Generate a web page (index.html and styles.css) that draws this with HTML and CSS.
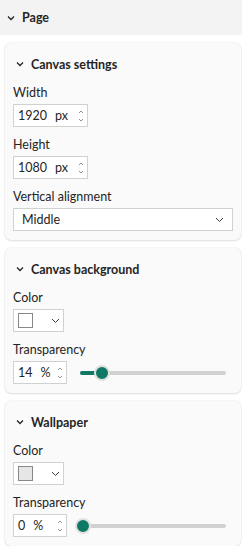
FILE: index.html
```html
<!DOCTYPE html>
<html>
<head>
  <title>Format page</title>
  <link rel="stylesheet" href="styles.css">
</head>
<body>
  <div class="pane-header">
    <svg class="chev" width="8" height="6" viewBox="0 0 8 6"><path d="M1 1.5 L4 4.5 L7 1.5" fill="none" stroke="#252423" stroke-width="1.3"/></svg>
    <span>Page</span>
  </div>

  <div class="card">
    <div class="card-title">
      <svg class="chev" width="8" height="6" viewBox="0 0 8 6"><path d="M1 1.5 L4 4.5 L7 1.5" fill="none" stroke="#252423" stroke-width="1.3"/></svg>
      <span>Canvas settings</span>
    </div>
    <label class="field-label">Width</label>
    <div class="num-input wide">
      <span class="val">1920</span><span class="unit">px</span>
      <span class="spin">
        <svg width="6" height="4" viewBox="0 0 6 4"><path d="M1 3 L3 1 L5 3" fill="none" stroke="#8a8886" stroke-width="0.9"/></svg>
        <svg width="6" height="4" viewBox="0 0 6 4"><path d="M1 1 L3 3 L5 1" fill="none" stroke="#8a8886" stroke-width="0.9"/></svg>
      </span>
    </div>
    <label class="field-label">Height</label>
    <div class="num-input wide">
      <span class="val">1080</span><span class="unit">px</span>
      <span class="spin">
        <svg width="6" height="4" viewBox="0 0 6 4"><path d="M1 3 L3 1 L5 3" fill="none" stroke="#8a8886" stroke-width="0.9"/></svg>
        <svg width="6" height="4" viewBox="0 0 6 4"><path d="M1 1 L3 3 L5 1" fill="none" stroke="#8a8886" stroke-width="0.9"/></svg>
      </span>
    </div>
    <label class="field-label">Vertical alignment</label>
    <div class="select">
      <span>Middle</span>
      <svg width="9" height="6" viewBox="0 0 9 6"><path d="M1 1 L4.5 4.5 L8 1" fill="none" stroke="#3b3a39" stroke-width="1"/></svg>
    </div>
  </div>

  <div class="card">
    <div class="card-title">
      <svg class="chev" width="8" height="6" viewBox="0 0 8 6"><path d="M1 1.5 L4 4.5 L7 1.5" fill="none" stroke="#252423" stroke-width="1.3"/></svg>
      <span>Canvas background</span>
    </div>
    <label class="field-label">Color</label>
    <div class="color-btn">
      <span class="swatch"></span>
      <svg width="9" height="6" viewBox="0 0 9 6"><path d="M1 1 L4.5 4.5 L8 1" fill="none" stroke="#3b3a39" stroke-width="1"/></svg>
    </div>
    <label class="field-label">Transparency</label>
    <div class="slider-row">
      <div class="num-input short">
        <span class="val">14</span><span class="unit">%</span>
        <span class="spin">
          <svg width="6" height="4" viewBox="0 0 6 4"><path d="M1 3 L3 1 L5 3" fill="none" stroke="#8a8886" stroke-width="0.9"/></svg>
          <svg width="6" height="4" viewBox="0 0 6 4"><path d="M1 1 L3 3 L5 1" fill="none" stroke="#8a8886" stroke-width="0.9"/></svg>
        </span>
      </div>
      <div class="slider">
        <div class="track"><div class="fill" style="width: 22px"></div></div>
        <div class="thumb" style="left: 14px"></div>
      </div>
    </div>
  </div>

  <div class="card">
    <div class="card-title">
      <svg class="chev" width="8" height="6" viewBox="0 0 8 6"><path d="M1 1.5 L4 4.5 L7 1.5" fill="none" stroke="#252423" stroke-width="1.3"/></svg>
      <span>Wallpaper</span>
    </div>
    <label class="field-label">Color</label>
    <div class="color-btn">
      <span class="swatch gray"></span>
      <svg width="9" height="6" viewBox="0 0 9 6"><path d="M1 1 L4.5 4.5 L8 1" fill="none" stroke="#3b3a39" stroke-width="1"/></svg>
    </div>
    <label class="field-label">Transparency</label>
    <div class="slider-row">
      <div class="num-input short">
        <span class="val">0</span><span class="unit">%</span>
        <span class="spin">
          <svg width="6" height="4" viewBox="0 0 6 4"><path d="M1 3 L3 1 L5 3" fill="none" stroke="#8a8886" stroke-width="0.9"/></svg>
          <svg width="6" height="4" viewBox="0 0 6 4"><path d="M1 1 L3 3 L5 1" fill="none" stroke="#8a8886" stroke-width="0.9"/></svg>
        </span>
      </div>
      <div class="slider">
        <div class="track"><div class="fill" style="width: 0px"></div></div>
        <div class="thumb" style="left: -5px"></div>
      </div>
    </div>
  </div>
</body>
</html>
```

FILE: styles.css
```css
body {
  margin: 0;
  background-color: #fff;
  font-family: "Segoe UI", Lato, "Noto Sans", sans-serif;
  font-size: 12.5px;
  color: #252423;
}
.pane-header {
  height: 35px;
  background-color: #f3f3f3;
  display: flex;
  align-items: center;
  padding-left: 7px;
  gap: 7px;
  font-weight: 700;
}
.card {
  margin: 8px 1px 0 5px;
  background-color: #fafafa;
  border-radius: 6px;
  box-shadow: 0 0 2px rgba(0, 0, 0, 0.12), 0 1px 2px rgba(0, 0, 0, 0.1);
  padding: 10px 8px 9px;
  display: flex;
  flex-direction: column;
  align-items: flex-start;
}
.card-title {
  height: 22px;
  display: flex;
  align-items: center;
  gap: 7px;
  padding-left: 3px;
  font-weight: 700;
}
.field-label {
  display: block;
  height: 16px;
  line-height: 16px;
  margin: 10px 0 3px;
}
.num-input {
  height: 23px;
  box-sizing: border-box;
  border: 1px solid #d1d1d1;
  background-color: #fff;
  display: flex;
  align-items: center;
  padding-left: 4px;
  position: relative;
}
.num-input.wide {
  width: 75px;
}
.num-input.short {
  width: 54px;
}
.num-input .unit {
  margin-left: 8px;
}
.spin {
  margin-left: auto;
  margin-right: 3px;
  display: flex;
  flex-direction: column;
  gap: 4px;
}
.spin svg {
  display: block;
}
.select {
  width: 220px;
  height: 23px;
  box-sizing: border-box;
  border: 1px solid #d1d1d1;
  background-color: #fff;
  display: flex;
  align-items: center;
  justify-content: space-between;
  padding: 0 8px 0 8px;
}
.color-btn {
  width: 51px;
  height: 23px;
  box-sizing: border-box;
  border: 1px solid #d1d1d1;
  background-color: #fff;
  display: flex;
  align-items: center;
  padding-left: 4px;
  gap: 18px;
}
.swatch {
  width: 15px;
  height: 15px;
  box-sizing: border-box;
  border: 1px solid #8a8886;
  background-color: #fff;
}
.swatch.gray {
  background-color: #e6e6e6;
}
.slider-row {
  display: flex;
  align-items: center;
}
.slider {
  position: relative;
  width: 146px;
  height: 16px;
  margin-left: 13px;
  display: flex;
  align-items: center;
}
.track {
  width: 100%;
  height: 4px;
  border-radius: 2px;
  background-color: #d1d1d1;
}
.fill {
  height: 4px;
  border-radius: 2px;
  background-color: #117865;
}
.thumb {
  position: absolute;
  top: 0;
  width: 12px;
  height: 12px;
  border-radius: 50%;
  background-color: #117865;
  border: 2px solid #e1e1e1;
}
```
